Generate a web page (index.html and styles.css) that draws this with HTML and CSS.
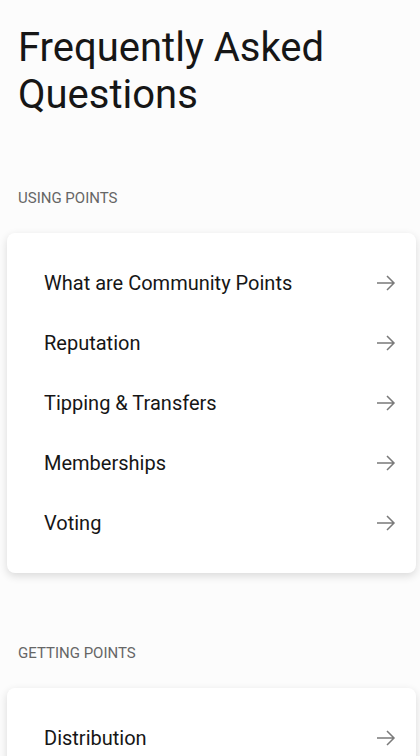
FILE: index.html
```html
<!DOCTYPE html>
<html lang="en">
<head>
    <meta charset="UTF-8">
    <meta name="viewport" content="width=device-width, initial-scale=1.0">
    <title>Frequently Asked Questions</title>
    <link rel="stylesheet" href="styles.css">
</head>
<body>

<div class="page">
    <h1 class="title">Frequently Asked Questions</h1>

    <div class="section-label">USING POINTS</div>
    <ul class="card">
        <li class="row"><span>What are Community Points</span><svg class="arrow" viewBox="0 0 20 20"><path d="M1 10H18M11 3L18 10L11 17"/></svg></li>
        <li class="row"><span>Reputation</span><svg class="arrow" viewBox="0 0 20 20"><path d="M1 10H18M11 3L18 10L11 17"/></svg></li>
        <li class="row"><span>Tipping &amp; Transfers</span><svg class="arrow" viewBox="0 0 20 20"><path d="M1 10H18M11 3L18 10L11 17"/></svg></li>
        <li class="row"><span>Memberships</span><svg class="arrow" viewBox="0 0 20 20"><path d="M1 10H18M11 3L18 10L11 17"/></svg></li>
        <li class="row"><span>Voting</span><svg class="arrow" viewBox="0 0 20 20"><path d="M1 10H18M11 3L18 10L11 17"/></svg></li>
    </ul>

    <div class="section-label">GETTING POINTS</div>
    <ul class="card">
        <li class="row"><span>Distribution</span><svg class="arrow" viewBox="0 0 20 20"><path d="M1 10H18M11 3L18 10L11 17"/></svg></li>
    </ul>
</div>

</body>
</html>
```

FILE: styles.css
```css
body {
    margin: 0;
    background-color: #fcfcfc;
    font-family: Roboto, "Liberation Sans", Arial, sans-serif;
    color: #161616;
}
.page {
    padding: 0 4px 0 7px;
}
.title {
    margin: 24px 0 0 11px;
    font-size: 40px;
    font-weight: 400;
    line-height: 47px;
}
.section-label {
    margin: 70px 0 25px 11px;
    font-size: 15px;
    line-height: 20px;
    color: #666;
}
.card {
    list-style: none;
    margin: 0;
    padding: 20px 20px 20px 37px;
    background-color: #fff;
    border-radius: 8px;
    box-shadow: 0 3px 9px rgba(0, 0, 0, 0.14);
}
.row {
    display: flex;
    align-items: center;
    justify-content: space-between;
    height: 60px;
    font-size: 20px;
}
.arrow {
    width: 20px;
    height: 20px;
    fill: none;
    stroke: #7a7a7a;
    stroke-width: 1.5;
}
```
